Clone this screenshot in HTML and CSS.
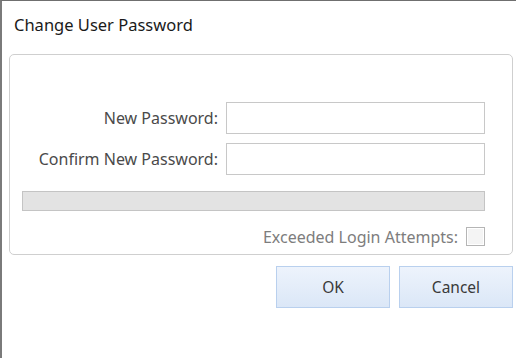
FILE: index.html
```html
<!DOCTYPE html>
<html lang="en">
<head>
  <meta charset="UTF-8">
  <meta name="viewport" content="width=device-width, initial-scale=1.0">
  <title>Change User Password</title>
  <link rel="stylesheet" href="styles.css">
</head>
<body>

  <div class="window">
    <div class="title">Change User Password</div>

    <div class="panel">
      <div class="form">
        <label class="label" for="new-pass">New Password:</label>
        <input class="field" id="new-pass" type="password">
        <label class="label" for="confirm-pass">Confirm New Password:</label>
        <input class="field" id="confirm-pass" type="password">
      </div>

      <div class="strength"></div>

      <div class="attempts">
        <span class="attempts-label">Exceeded Login Attempts:</span>
        <span class="check"></span>
      </div>
    </div>

    <div class="buttons">
      <button class="btn">OK</button>
      <button class="btn">Cancel</button>
    </div>
  </div>

</body>
</html>
```

FILE: styles.css
```css
body {
  margin: 0;
  padding: 0;
  background: #fff;
  font-family: "Noto Sans", "Open Sans", sans-serif;
}

.window {
  height: 358px;
  box-sizing: border-box;
  border-top: 1px solid #6f6f6f;
  border-left: 2px solid #7a7a7a;
  background: #fff;
}

.title {
  padding: 13px 0 0 12px;
  height: 53px;
  box-sizing: border-box;
  font-size: 16.5px;
  line-height: 22px;
  color: #1a1a1a;
}

.panel {
  margin-left: 7px;
  width: 504px;
  height: 201px;
  box-sizing: border-box;
  border: 1px solid #cfcfcf;
  border-radius: 5px;
  padding: 47px 27px 0 12px;
}

.form {
  display: grid;
  grid-template-columns: 1fr 259px;
  column-gap: 8px;
  row-gap: 9px;
  align-items: center;
}

.label {
  text-align: right;
  font-size: 16px;
  color: #4a4a4a;
}

.field {
  height: 32px;
  box-sizing: border-box;
  margin: 0;
  border: 1px solid #c8c8c8;
  background: #fff;
}

.strength {
  margin-top: 16px;
  height: 20px;
  box-sizing: border-box;
  border: 1px solid #c4c4c4;
  background: #e3e3e3;
}

.attempts {
  margin-top: 16px;
  display: flex;
  justify-content: flex-end;
  align-items: center;
  gap: 8px;
  height: 19px;
}

.attempts-label {
  font-size: 16px;
  color: #7d7d7d;
}

.check {
  width: 19px;
  height: 19px;
  box-sizing: border-box;
  border: 1px solid #b5b5b5;
  background: #f4f4f4;
  box-shadow: inset 0 0 0 1px #fff;
}

.buttons {
  margin-top: 11px;
  width: 511px;
  display: flex;
  justify-content: flex-end;
  gap: 9px;
}

.btn {
  width: 114px;
  height: 42px;
  margin: 0;
  font-family: "Noto Sans", "Open Sans", sans-serif;
  font-size: 15.5px;
  color: #3a3a3a;
  border: 1px solid #b9d0ee;
  background: linear-gradient(#edf3fc, #dbe7f7);
  cursor: pointer;
}
```
